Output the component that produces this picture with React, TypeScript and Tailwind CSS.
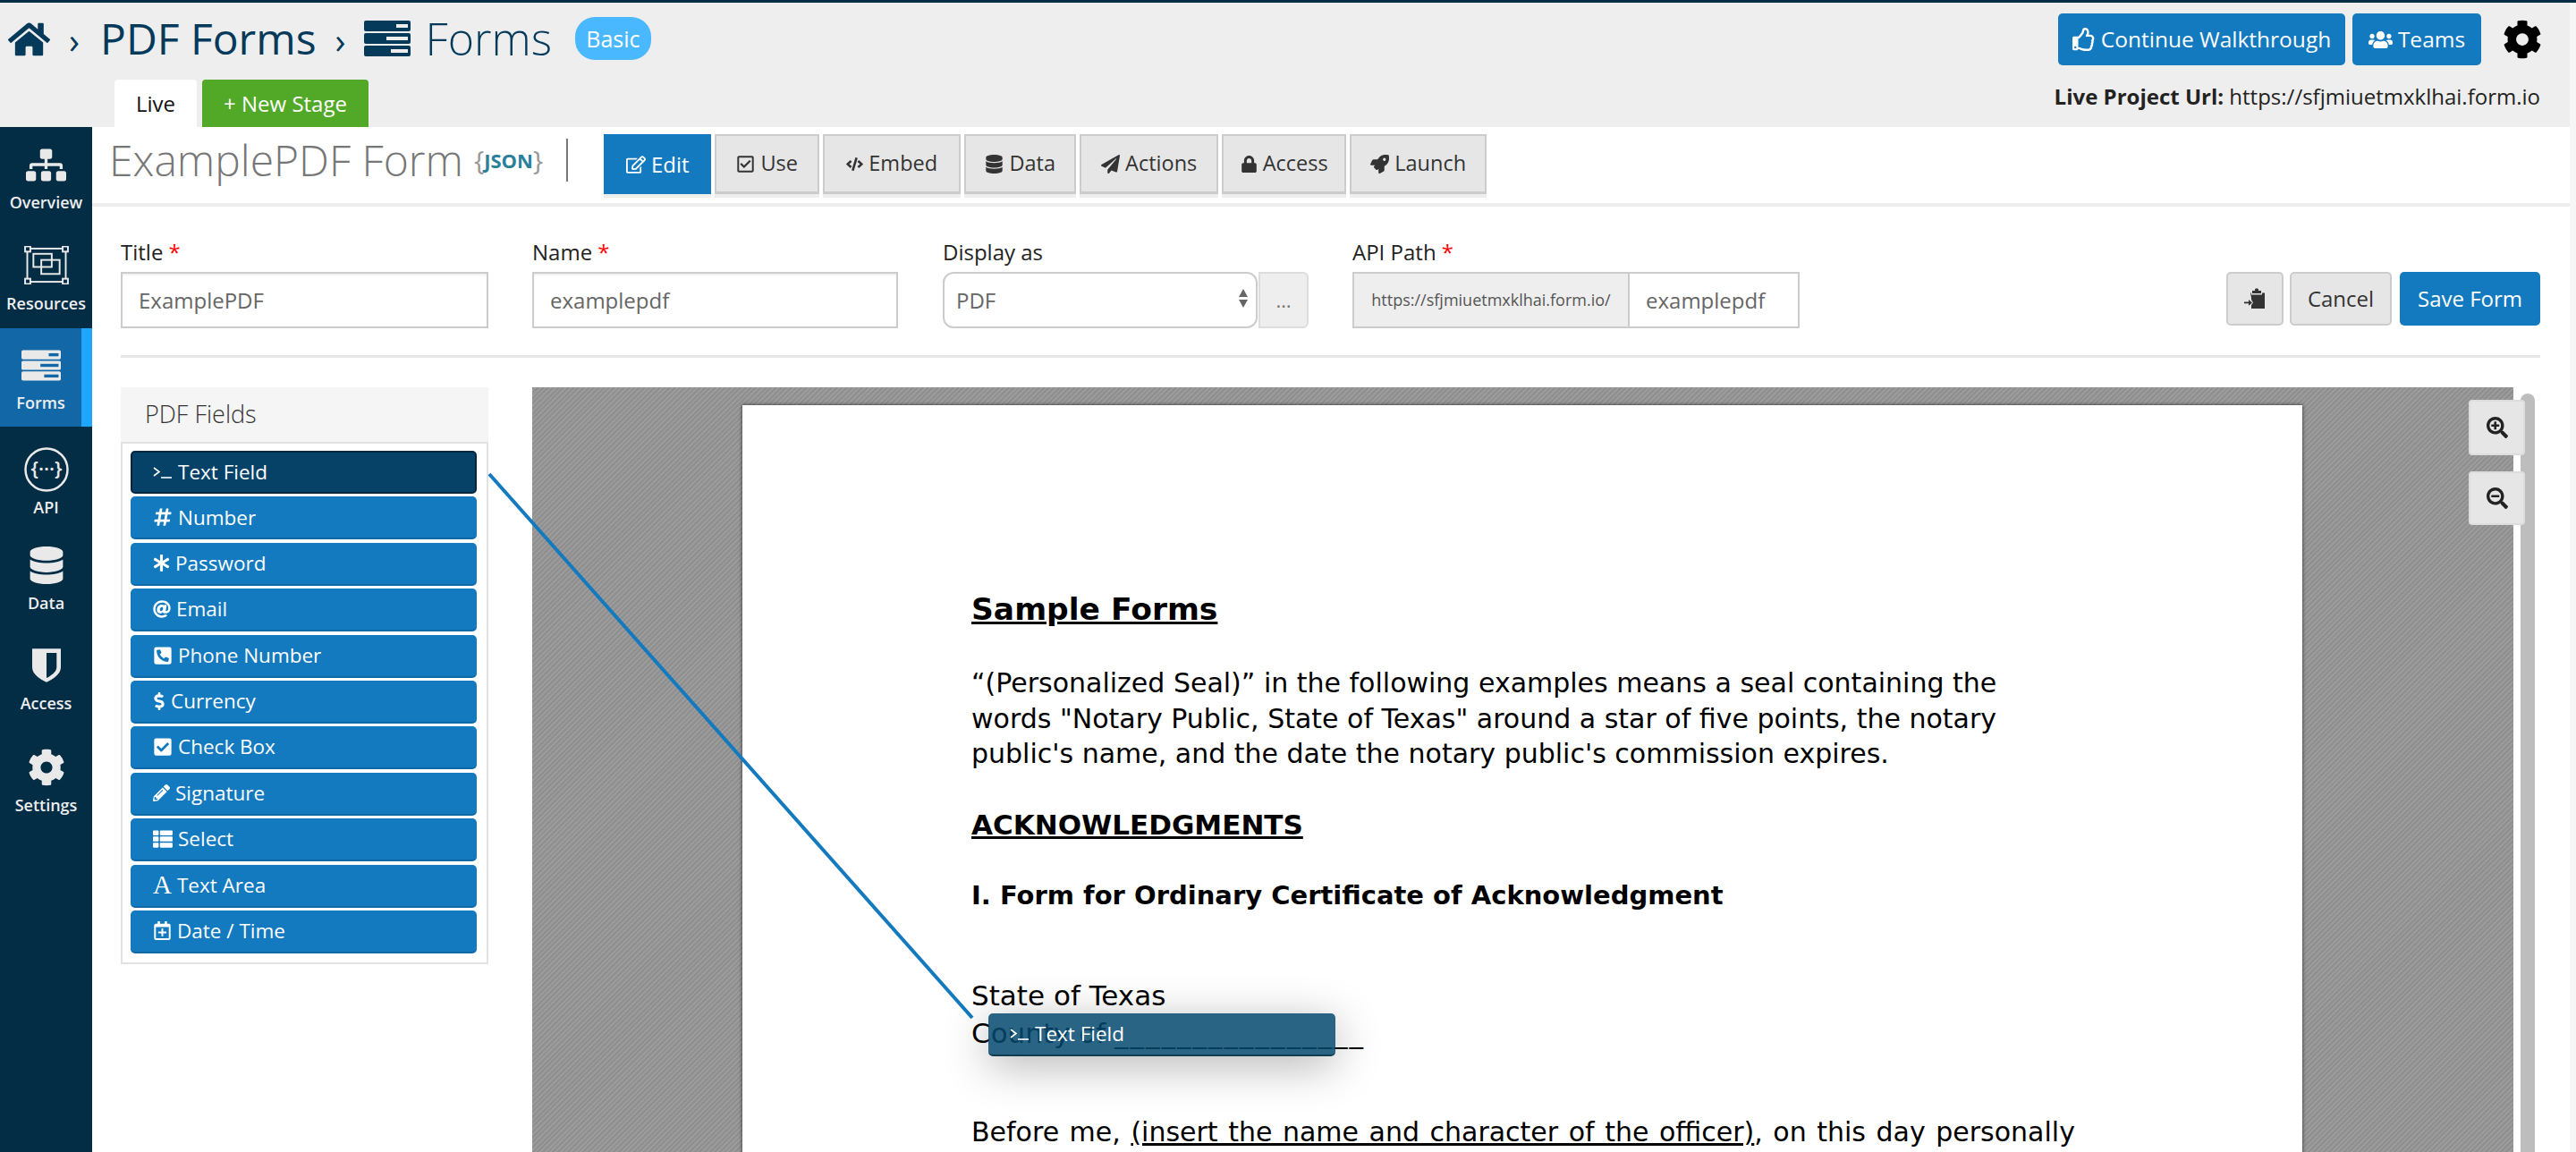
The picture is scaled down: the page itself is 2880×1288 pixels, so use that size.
import React from 'react';
import {
  FaHome, FaRegThumbsUp, FaUsers, FaCog, FaRegEdit, FaRegCheckSquare, FaCode, FaDatabase, FaPaperPlane,
  FaLock, FaRocket, FaSitemap, FaHashtag, FaAsterisk, FaAt, FaPhoneSquareAlt, FaDollarSign, FaCheckSquare,
  FaPencilAlt, FaThList, FaRegCalendarPlus, FaSearchPlus, FaSearchMinus,
} from 'react-icons/fa';

// Stacked bars icon, used in the breadcrumb and the sidebar
const FormsIcon = ({ fill, slot, className }: { fill: string; slot: string; className: string }) => (
  <svg viewBox="0 0 52 40" className={className}>
    <rect x="0" y="0" width="52" height="12" rx="2" fill={fill} />
    <rect x="0" y="14" width="52" height="12" rx="2" fill={fill} />
    <rect x="0" y="28" width="52" height="12" rx="2" fill={fill} />
    <rect x="36" y="4" width="13" height="4" fill={slot} />
    <rect x="25" y="18" width="24" height="4" fill={slot} />
    <rect x="30" y="32" width="19" height="4" fill={slot} />
  </svg>
);

const ResourcesIcon = () => (
  <svg viewBox="0 0 50 44" className="w-[50px] h-[43px]" fill="none" stroke="#e9e9e9" strokeWidth="2">
    <rect x="3" y="3" width="44" height="38" />
    <rect x="0.5" y="0.5" width="6" height="6" fill="#032c45" />
    <rect x="43.5" y="0.5" width="6" height="6" fill="#032c45" />
    <rect x="0.5" y="37.5" width="6" height="6" fill="#032c45" />
    <rect x="43.5" y="37.5" width="6" height="6" fill="#032c45" />
    <rect x="10" y="9" width="21" height="15" />
    <rect x="19" y="16" width="21" height="16" />
  </svg>
);

const ApiIcon = () => (
  <svg viewBox="0 0 50 50" className="w-[50px] h-[50px]">
    <circle cx="25" cy="25" r="23.5" fill="none" stroke="#e9e9e9" strokeWidth="2.5" />
    <text x="25" y="32" textAnchor="middle" fill="#e9e9e9" fontSize="22" fontFamily="'Open Sans', sans-serif">{'{···}'}</text>
  </svg>
);

const ShieldIcon = () => (
  <svg viewBox="0 0 34 40" className="w-[32px] h-[38px]">
    <path d="M0 0H34V22C34 31 24 36 17 40C10 36 0 31 0 22Z" fill="#e9e9e9" />
    <path d="M17 5H29V22C29 28 22 32 17 35Z" fill="#032c45" />
  </svg>
);

// Clipboard with an arrow going into it
const ImportIcon = () => (
  <svg viewBox="0 0 24 24" className="w-[24px] h-[24px]" fill="#333">
    <path d="M12 1.5C12 0 16 0 16 1.5V3H19V6H9V3H12Z" />
    <path d="M7 5.5H8V7.5H20V5.5H23V23H8V19L10 16.5L8 13V11Z" />
    <rect x="0" y="15.5" width="7" height="1.8" />
    <path d="M5 13L9 16.4L5 19.8Z" />
  </svg>
);

const TerminalGlyph = () => (
  <svg viewBox="0 0 22 14" className="w-[22px] h-[14px]" fill="none" stroke="#fff" strokeWidth="1.6">
    <path d="M1 2L7 6.5L1 11" />
    <path d="M9 13H21" />
  </svg>
);

const topTabs = [
  { label: 'Use', icon: <FaRegCheckSquare className="text-[21px]" />, w: 'w-[117px]' },
  { label: 'Embed', icon: <FaCode className="text-[19px]" />, w: 'w-[154px]' },
  { label: 'Data', icon: <FaDatabase className="text-[21px]" />, w: 'w-[125px]' },
  { label: 'Actions', icon: <FaPaperPlane className="text-[21px]" />, w: 'w-[155px]' },
  { label: 'Access', icon: <FaLock className="text-[19px]" />, w: 'w-[139px]' },
  { label: 'Launch', icon: <FaRocket className="text-[21px]" />, w: 'w-[153px]' },
];

const navItems = [
  { label: 'Overview', h: 'h-[112px]', icon: <FaSitemap className="text-[45px] text-[#e9e9e9]" /> },
  { label: 'Resources', h: 'h-[113px]', icon: <ResourcesIcon /> },
  { label: 'Forms', h: 'h-[110px]', icon: <FormsIcon fill="#e9e9e9" slot="#1268a6" className="w-[44px] h-[35px]" />, active: true },
  { label: 'API', h: 'h-[123px]', icon: <ApiIcon /> },
  { label: 'Data', h: 'h-[92px]', icon: <FaDatabase className="text-[42px] text-[#e9e9e9]" /> },
  { label: 'Access', h: 'h-[132px]', icon: <ShieldIcon /> },
  { label: 'Settings', h: 'h-[96px]', icon: <FaCog className="text-[42px] text-[#e9e9e9]" /> },
];

const fields = [
  { label: 'Text Field', icon: <TerminalGlyph />, active: true },
  { label: 'Number', icon: <FaHashtag className="text-[22px]" /> },
  { label: 'Password', icon: <FaAsterisk className="text-[19px]" /> },
  { label: 'Email', icon: <FaAt className="text-[20px]" /> },
  { label: 'Phone Number', icon: <FaPhoneSquareAlt className="text-[22px]" /> },
  { label: 'Currency', icon: <FaDollarSign className="text-[20px] -ml-[3px] -mr-[3px]" /> },
  { label: 'Check Box', icon: <FaCheckSquare className="text-[22px]" /> },
  { label: 'Signature', icon: <FaPencilAlt className="text-[19px]" /> },
  { label: 'Select', icon: <FaThList className="text-[22px]" /> },
  { label: 'Text Area', icon: <span className="font-['Liberation_Serif',serif] text-[29px] leading-none">A</span> },
  { label: 'Date / Time', icon: <FaRegCalendarPlus className="text-[21px]" /> },
];

const inputCls =
  'h-[63px] border-2 border-[#ccc] bg-white px-[18px] text-[24px] text-[#666] outline-none shadow-[inset_0_2px_2px_rgba(0,0,0,0.06)]';

const Req = () => <span className="text-[#ff0000]"> *</span>;

export default function App() {
  return (
    <div className="relative w-[2880px] h-[1288px] overflow-hidden bg-white font-['Open_Sans',sans-serif] text-[#222]">
      <div className="h-[3px] bg-[#032c45]" />

      <div className="flex">
        <div className="w-[2873px]">
          {/* Header */}
          <div className="h-[139px] bg-[#eeeeee] flex justify-between">
            <div className="flex flex-col">
              <div className="flex items-center h-[86px] pl-[9px] text-[#053a5b] text-[48px] leading-none">
                <FaHome className="text-[46px] mt-[-4px] w-[47px]" />
                <span className="ml-[21px] text-[40px] mt-[-2px]">›</span>
                <span className="ml-[23px] mt-[-6px]">PDF Forms</span>
                <span className="ml-[21px] text-[40px] mt-[-2px]">›</span>
                <span className="ml-[20px] mt-[-6px] flex items-center">
                  <FormsIcon fill="#053a5b" slot="#eeeeee" className="w-[52px] h-[40px]" />
                  <span className="ml-[17px] font-light text-[50px]">Forms</span>
                </span>
                <span className="ml-[26px] mt-[-6px] flex items-center justify-center w-[85px] h-[48px] rounded-[22px] bg-[#4ab8ff] text-white text-[25px]">Basic</span>
              </div>
              <div className="flex pl-[128px] gap-[6px]">
                <div className="w-[92px] h-[53px] bg-white rounded-t-[4px] flex items-center justify-center text-[24px] text-[#111]">Live</div>
                <div className="w-[186px] h-[53px] bg-[#52a827] rounded-t-[4px] flex items-center justify-center text-[24px] text-white">+ New Stage</div>
              </div>
            </div>
            <div className="flex flex-col items-end pr-[33px] pt-[12px]">
              <div className="flex items-center">
                <button className="flex items-center justify-center gap-[6px] w-[321px] h-[58px] rounded-[5px] bg-[#137abf] text-white text-[24.5px]">
                  <FaRegThumbsUp className="text-[26px]" />Continue Walkthrough
                </button>
                <button className="ml-[8px] flex items-center justify-center gap-[6px] w-[144px] h-[58px] rounded-[5px] bg-[#137abf] text-white text-[24.5px]">
                  <FaUsers className="text-[27px]" />Teams
                </button>
                <FaCog className="ml-[24px] mr-[-2px] text-[44px] text-black" />
              </div>
              <div className="mt-[19px] text-[24px] leading-[32px] text-[#222] whitespace-nowrap">
                <span className="font-bold">Live Project Url:</span> https://sfjmiuetmxklhai.form.io
              </div>
            </div>
          </div>

          <div className="flex h-[1146px]">
            {/* Sidebar */}
            <div className="w-[103px] shrink-0 bg-[#032c45]">
              {navItems.map((item) => (
                <div
                  key={item.label}
                  className={`relative ${item.h} flex flex-col items-center justify-center text-[18px] font-semibold text-[#eee] ${item.active ? 'bg-[#1268a6] pr-[12px]' : ''}`}
                >
                  <div className="h-[56px] flex items-center justify-center">{item.icon}</div>
                  <div className="leading-[28px]">{item.label}</div>
                  {item.active && <div className="absolute right-0 top-0 bottom-0 w-[12px] bg-[#1fa7ff]" />}
                </div>
              ))}
            </div>

            {/* Content */}
            <div className="flex-1 min-w-0">
              <div className="h-[89px] border-b-[4px] border-[#eeeeee] flex pl-[19px] pt-[8px]">
                <div className="flex items-center h-[58px] text-[#777] text-[48px] font-light leading-none whitespace-nowrap">
                  ExamplePDF Form
                  <span className="ml-[12px] text-[30px] text-[#999] font-normal">{'{'}<span className="text-[22px] font-bold text-[#2a7f9b] align-[2px]">JSON</span>{'}'}</span>
                  <span className="ml-[26px] w-[2px] h-[48px] bg-[#777]" />
                </div>
                <div className="flex ml-[40px] gap-[4px]">
                  <div className="w-[120px] h-[67px] bg-[#137abf] text-white text-[24px] flex items-center justify-center gap-[6px] shadow-[0_4px_0_#eeeeee]">
                    <FaRegEdit className="text-[22px]" />Edit
                  </div>
                  {topTabs.map((t) => (
                    <div key={t.label} className={`${t.w} h-[67px] bg-[#e6e6e6] border-2 border-[#ccc] border-b-[3px] text-[#333] text-[23.5px] flex items-center justify-center gap-[6px] shadow-[0_4px_0_#eeeeee]`}>
                      {t.icon}{t.label}
                    </div>
                  ))}
                </div>
              </div>

              <div className="ml-[32px] mr-[33px]">
                {/* Form settings */}
                <div className="flex items-end box-content h-[136px] pb-[30px] border-b-[3px] border-[#e6e6e6]">
                  <div className="w-[411px]">
                    <div className="text-[24px] leading-[32px] mb-[6px]">Title<Req /></div>
                    <input readOnly value="ExamplePDF" className={`${inputCls} w-full`} />
                  </div>
                  <div className="w-[409px] ml-[49px]">
                    <div className="text-[24px] leading-[32px] mb-[6px]">Name<Req /></div>
                    <input readOnly value="examplepdf" className={`${inputCls} w-full`} />
                  </div>
                  <div className="ml-[50px]">
                    <div className="text-[24px] leading-[32px] mb-[6px]">Display as</div>
                    <div className="flex">
                      <div className="relative w-[352px] h-[63px] border-2 border-[#ccc] rounded-[12px] bg-white px-[13px] flex items-center text-[24px] text-[#666]">
                        PDF
                        <div className="absolute right-[9px] top-[17px] flex flex-col gap-[3px]">
                          <div className="w-0 h-0 border-x-[5px] border-x-transparent border-b-[9px] border-b-[#666]" />
                          <div className="w-0 h-0 border-x-[5px] border-x-transparent border-t-[9px] border-t-[#666]" />
                        </div>
                      </div>
                      <div className="w-[56px] ml-[1px] h-[63px] bg-[#eeeeee] border-2 border-[#ddd] rounded-r-[6px] flex items-center justify-center text-[22px] text-[#777]">…</div>
                    </div>
                  </div>
                  <div className="ml-[49px]">
                    <div className="text-[24px] leading-[32px] mb-[6px]">API Path<Req /></div>
                    <div className="flex w-[500px] h-[63px] border-2 border-[#ccc]">
                      <div className="w-[308px] bg-[#eeeeee] border-r-2 border-[#ccc] flex items-center justify-center text-[18px] text-[#555] whitespace-nowrap">https://sfjmiuetmxklhai.form.io/</div>
                      <input readOnly value="examplepdf" className="flex-1 min-w-0 px-[18px] text-[24px] text-[#666] outline-none" />
                    </div>
                  </div>
                  <div className="ml-auto flex gap-[7px] mb-[3px]">
                    <button className="w-[64px] h-[60px] bg-[#e6e6e6] border-2 border-[#ccc] rounded-[5px] flex items-center justify-center"><ImportIcon /></button>
                    <button className="w-[114px] h-[60px] bg-[#e6e6e6] border-2 border-[#ccc] rounded-[5px] text-[24px] text-[#333]">Cancel</button>
                    <button className="ml-[2px] w-[157px] h-[60px] bg-[#137abf] rounded-[5px] text-[24px] text-white">Save Form</button>
                  </div>
                </div>

                {/* Builder */}
                <div className="flex mt-[33px]">
                  <div className="w-[411px] shrink-0">
                    <div className="h-[61px] bg-[#f5f5f5] flex items-center pl-[27px] text-[27px] font-light text-[#333]">PDF Fields</div>
                    <div className="h-[584px] border-2 border-[#e2e2e2] pl-[9px] pr-[11px] pt-[8px] flex flex-col gap-[3.4px]">
                      {fields.map((f) => (
                        <div
                          key={f.label}
                          className={`h-[48px] shrink-0 flex items-center gap-[6px] rounded-[5px] text-[22.5px] text-white ${f.active ? 'bg-[#064268] border-2 border-[#04263c] pl-[23px]' : 'bg-[#137abf] border-b-2 border-[#0f69a5] pl-[25px]'}`}
                        >
                          <span className="flex items-center">{f.icon}</span>{f.label}
                        </div>
                      ))}
                    </div>
                  </div>

                  <div className="relative ml-[49px] w-[2245px] h-[880px]">
                    <div className="w-[2215px] h-full pl-[235px] pt-[20px] bg-[repeating-linear-gradient(135deg,#8f8f8f_0px,#8f8f8f_2px,#9b9b9b_2px,#9b9b9b_4px)]">
                      <div className="w-[1744px] h-[900px] bg-white pl-[256px] pt-[208px] shadow-[0_0_4px_rgba(0,0,0,0.7)] font-['DejaVu_Sans',sans-serif] text-[30px] leading-[40px] text-black whitespace-nowrap">
                        <div className="text-[34.5px] font-bold underline">Sample Forms</div>
                        <div className="mt-[43px] leading-[39.5px]">
                          <div>“(Personalized Seal)” in the following examples means a seal containing the</div>
                          <div>words "Notary Public, State of Texas" around a star of five points, the notary</div>
                          <div>public's name, and the date the notary public's commission expires.</div>
                        </div>
                        <div className="mt-[39px] text-[31px] font-bold underline">ACKNOWLEDGMENTS</div>
                        <div className="mt-[39px] text-[29px] font-bold">I. Form for Ordinary Certificate of Acknowledgment</div>
                        <div className="mt-[72px] text-[31px]">State of Texas</div>
                        <div className="mt-[2px] text-[31px]">County of <span className="tracking-[2px]">________________</span></div>
                        <div className="mt-[71px] [word-spacing:2px]">Before me, <span className="underline">(insert the name and character of the officer)</span>, on this day personally</div>
                      </div>
                    </div>
                    {/* Zoom buttons + scrollbar */}
                    <div className="absolute left-[2223px] top-[7px] bottom-0 w-[16px] rounded-t-[8px] bg-[#bdbdbd]" />
                    <div className="absolute left-[2165px] top-[14px] w-[63px] h-[62px] rounded-[4px] bg-[#e6e6e6] border-2 border-[#ddd] flex items-center justify-center">
                      <FaSearchPlus className="text-[24px] text-[#222]" />
                    </div>
                    <div className="absolute left-[2165px] top-[94px] w-[63px] h-[60px] rounded-[4px] bg-[#e6e6e6] border-2 border-[#ddd] flex items-center justify-center">
                      <FaSearchMinus className="text-[24px] text-[#222]" />
                    </div>
                  </div>
                </div>
              </div>
            </div>
          </div>
        </div>
        <div className="w-[7px] h-[1285px] bg-[#f6f6f6]" />
      </div>

      {/* Drag connector */}
      <svg className="absolute left-0 top-0 pointer-events-none" width="2880" height="1288">
        <line x1="547" y1="530" x2="1087" y2="1138" stroke="#137abf" strokeWidth="4" />
      </svg>

      {/* Dragged field */}
      <div className="absolute left-[1105px] top-[1133px] w-[388px] h-[48px] rounded-[5px] bg-[#05496f]/85 border-b-2 border-[#123c52] flex items-center gap-[6px] pl-[24px] text-[22.5px] text-white shadow-[0_10px_50px_rgba(0,0,0,0.3)]">
        <TerminalGlyph />Text Field
      </div>
    </div>
  );
}
